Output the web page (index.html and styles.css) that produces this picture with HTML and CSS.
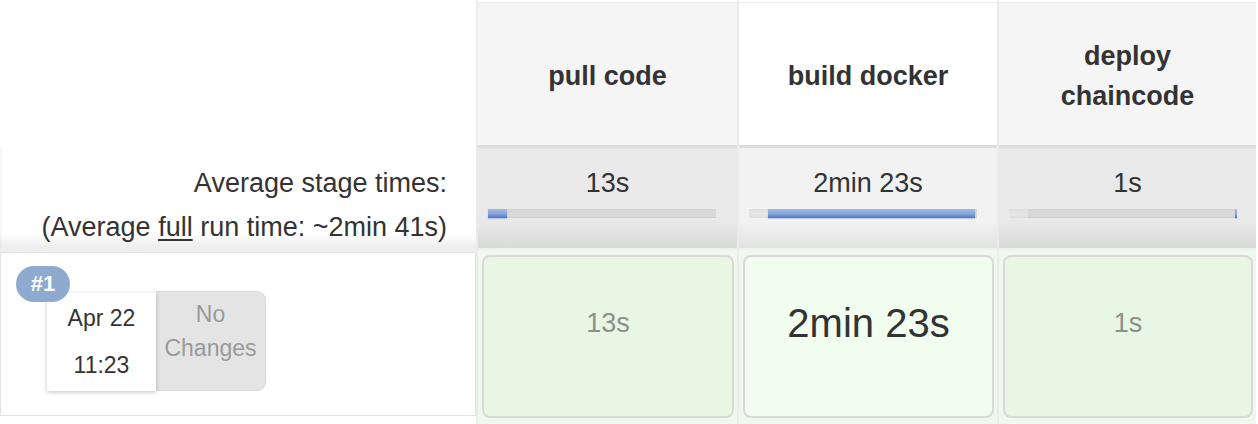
FILE: index.html
```html
<!DOCTYPE html>
<html lang="en">
<head>
<meta charset="utf-8">
<title>Stage View</title>
<link rel="stylesheet" href="styles.css">
</head>
<body>
<div class="stage-view">
  <div class="corner"></div>
  <div class="head">pull code</div>
  <div class="head head-active">build docker</div>
  <div class="head">deploy chaincode</div>

  <div class="avg-label">Average stage times:<br>(Average <u>full</u> run time: ~2min 41s)</div>
  <div class="avg">
    <div class="avg-time">13s</div>
    <div class="bar"><div class="bar-fill" style="width:19px"></div></div>
  </div>
  <div class="avg avg-active">
    <div class="avg-time">2min 23s</div>
    <div class="bar"><div class="bar-offset" style="width:19px"></div><div class="bar-fill" style="width:207px"></div></div>
  </div>
  <div class="avg">
    <div class="avg-time">1s</div>
    <div class="bar"><div class="bar-offset" style="width:19px"></div><div class="bar-fill" style="margin-left:207px;width:2px"></div></div>
  </div>

  <div class="run-label">
    <div class="run-box">
      <span class="badge">#1</span>
      <div class="run-info">
        <div class="date-box">Apr 22<br>11:23</div>
        <div class="changes-box">No<br>Changes</div>
      </div>
    </div>
  </div>
  <div class="run">
    <div class="stage-box">13s</div>
  </div>
  <div class="run">
    <div class="stage-box stage-box-active">2min 23s</div>
  </div>
  <div class="run">
    <div class="stage-box">1s</div>
  </div>
</div>
</body>
</html>
```

FILE: styles.css
```css
* { box-sizing: border-box; }

html, body {
  margin: 0;
  background: #ffffff;
}

body {
  font-family: "Liberation Sans", Helvetica, Arial, sans-serif;
  color: #333333;
  overflow: hidden;
}

.stage-view {
  display: grid;
  grid-template-columns: 476px 259px 258px 257px;
  grid-template-rows: 148px 100px 176px;
  column-gap: 2px;
  width: 1256px;
  background: #ebebeb;
}

.corner {
  background: #ffffff;
}

.head {
  display: flex;
  align-items: center;
  justify-content: center;
  text-align: center;
  padding: 5px 20px 0;
  background: #f5f5f5;
  border-top: 2px solid #ffffff;
  border-bottom: 3px solid #dddddd;
  box-shadow: inset 0 1px 0 #ececec;
  font-weight: bold;
  font-size: 27px;
  line-height: 40px;
  color: #333333;
}

.head-active {
  background: #ffffff;
}

.avg-label {
  background: linear-gradient(to bottom, #ffffff 86%, #ececec 100%);
  box-shadow: inset 3px 0 3px -2px rgba(0, 0, 0, 0.06);
  text-align: right;
  padding: 13px 29px 0 0;
  font-size: 27px;
  line-height: 44px;
  color: #333333;
}

.avg-label u {
  text-decoration-thickness: 2px;
  text-underline-offset: 3px;
}

.avg {
  background: linear-gradient(to bottom, #e9e9e9 74%, #d9d9d9 100%);
  padding: 15px 0 0 10px;
}

.avg-active {
  background: linear-gradient(to bottom, #f2f2f2 74%, #e1e1e1 100%);
}

.avg-time {
  text-align: center;
  padding-right: 10px;
  font-size: 27px;
  line-height: 40px;
  color: #333333;
}

.bar {
  display: flex;
  width: 228px;
  height: 9px;
  margin-top: 6px;
  background: linear-gradient(to bottom, #d2d2d2, #dadada 40%, #d6d6d6 100%);
  box-shadow: inset 0 -1px 0 rgba(0, 0, 0, 0.04);
}

.bar-offset {
  height: 100%;
  background: linear-gradient(to bottom, #dddddd, #e6e6e6 50%, #dedede);
}

.bar-fill {
  height: 100%;
  background: linear-gradient(to bottom, #a6badb 0%, #86a4d8 55%, #4b76cd 100%);
  box-shadow: 0 1px 1px rgba(60, 100, 180, 0.25);
}

.run-label {
  background: #ffffff;
  border-top: 4px solid #eeeeee;
}

.run-box {
  position: relative;
  height: 164px;
  border: 1px solid #e3e3e3;
  padding: 38px 0 0 46px;
  background: #ffffff;
}

.badge {
  position: absolute;
  top: 13px;
  left: 15px;
  z-index: 2;
  width: 54px;
  height: 36px;
  border-radius: 18px;
  background: #8eabcf;
  color: #ffffff;
  font-weight: bold;
  font-size: 22px;
  line-height: 36px;
  text-align: center;
}

.run-info {
  display: flex;
  align-items: flex-start;
}

.date-box {
  position: relative;
  z-index: 1;
  width: 109px;
  height: 98px;
  margin-top: 2px;
  padding-top: 2px;
  background: #ffffff;
  box-shadow: 0 1px 4px rgba(0, 0, 0, 0.25);
  text-align: center;
  font-size: 23px;
  line-height: 47px;
  color: #333333;
}

.changes-box {
  width: 110px;
  height: 100px;
  padding-top: 5px;
  background: #e4e4e4;
  border: 1px solid #d8d8d8;
  border-left: none;
  border-radius: 0 9px 9px 0;
  text-align: center;
  font-size: 23px;
  line-height: 34px;
  color: #9a9a9a;
}

.run {
  background: #eff8ec;
  border-top: 2px solid #f0f0f0;
  padding: 5px 3px 0 4px;
}

.stage-box {
  height: 163px;
  padding-top: 46px;
  border: 2px solid #d9d9d9;
  border-radius: 8px;
  background: #e8f7e4;
  text-align: center;
  font-size: 27px;
  line-height: 40px;
  color: #8b9189;
}

.stage-box-active {
  background: #f1fdee;
  font-size: 40px;
  color: #333333;
}
```
